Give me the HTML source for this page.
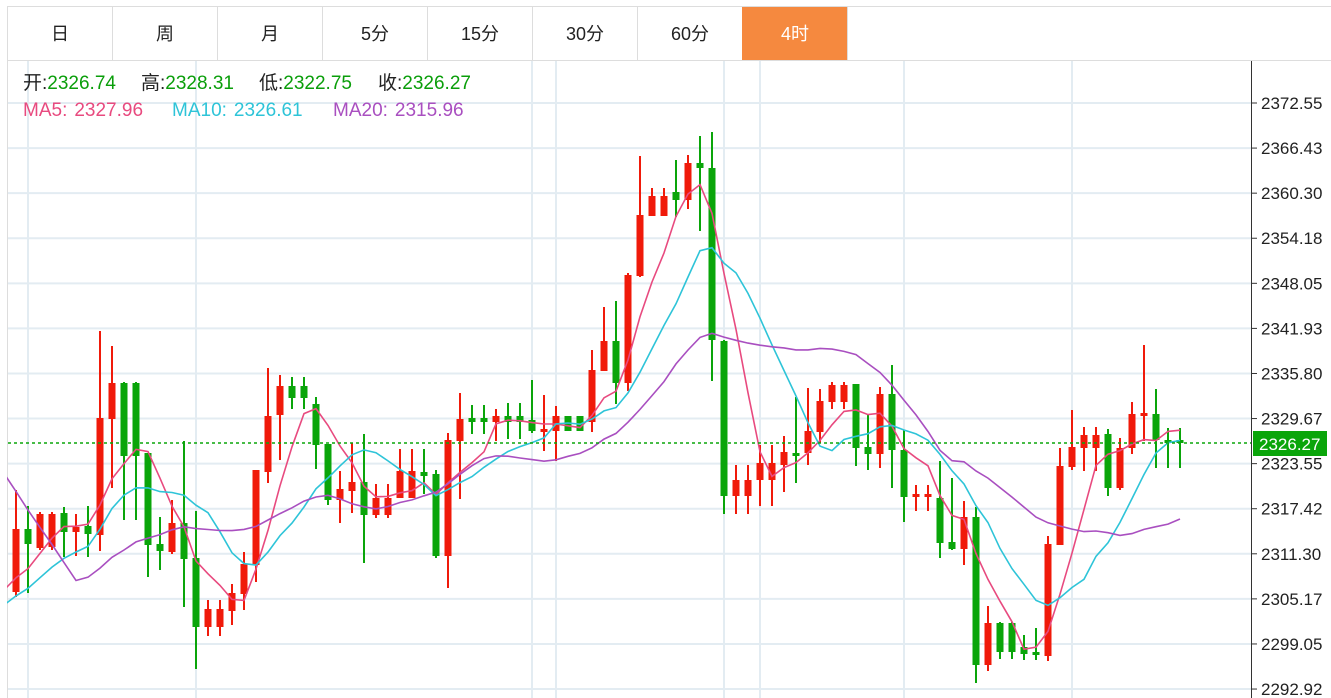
<!DOCTYPE html>
<html><head><meta charset="utf-8"><style>
body{margin:0;width:1331px;height:698px;background:#fff;overflow:hidden;font-family:"Liberation Sans","Noto Sans CJK SC",sans-serif;position:relative}
.tabs{position:absolute;left:7px;top:6px;height:53px;border-top:1px solid #ddd;border-bottom:1px solid #ddd;width:1324px;}
.tab{position:absolute;top:0;width:104px;height:53px;border-left:1px solid #ddd;text-align:center;line-height:55px;font-size:18px;color:#222}
.tab.on{background:#f5893f;color:#fff;border-left-color:#f5893f}
.lg{position:absolute;font-size:19px;white-space:nowrap;line-height:24px}
.g{color:#0a9e0a}
svg{position:absolute;left:0;top:0}
</style></head><body>
<svg id="s" width="1331" height="698"></svg>
<div class="tabs">
<div class="tab" style="left:0">日</div><div class="tab" style="left:105px">周</div><div class="tab" style="left:210px">月</div><div class="tab" style="left:315px">5分</div><div class="tab" style="left:420px">15分</div><div class="tab" style="left:525px">30分</div><div class="tab" style="left:630px">60分</div><div class="tab on" style="left:735px">4时</div><div class="tab" style="left:840px;border-left:1px solid #ddd;width:1px"></div>
</div>
<div class="lg" style="left:23px;top:72px;color:#222">开:<span class="g">2326.74</span></div>
<div class="lg" style="left:141px;top:72px;color:#222">高:<span class="g">2328.31</span></div>
<div class="lg" style="left:259px;top:72px;color:#222">低:<span class="g">2322.75</span></div>
<div class="lg" style="left:378px;top:72px;color:#222">收:<span class="g">2326.27</span></div>
<div class="lg" style="left:23px;top:99px;color:#e84a7f">MA5:<span style="margin-left:7px">2327.96</span></div>
<div class="lg" style="left:172px;top:99px;color:#2ec4d8">MA10:<span style="margin-left:7px">2326.61</span></div>
<div class="lg" style="left:333px;top:99px;color:#a94fc0">MA20:<span style="margin-left:7px">2315.96</span></div>
<script>
var C=[
[490,529,592,597,'R'],[506,529,544,593,'G'],[512,514,548,550,'R'],[512,514,547,550,'R'],[507,513,532,557,'G'],[514,527,532,556,'R'],[506,526,534,557,'G'],[331,418,535,551,'R'],[346,383,419,488,'R'],[382,383,456,520,'G'],[382,383,456,520,'G'],[453,453,545,577,'G'],[517,544,551,570,'G'],[500,523,552,554,'R'],[441,523,559,607,'G'],[511,558,627,669,'G'],[600,609,627,636,'R'],[600,609,627,636,'R'],[584,593,611,625,'R'],[552,564,594,610,'R'],[470,470,565,582,'R'],[368,416,472,483,'R'],[375,386,415,460,'R'],[377,386,398,409,'G'],[377,386,398,409,'G'],[397,404,445,469,'G'],
[444,444,500,505,'G'],[471,489,500,523,'R'],[443,482,491,513,'R'],[434,482,515,563,'G'],[484,498,515,518,'R'],[484,498,515,518,'R'],[449,471,498,498,'R'],[449,471,498,498,'R'],[449,472,476,494,'G'],[470,474,556,558,'G'],[433,440,556,588,'R'],[393,419,441,499,'R'],[405,418,422,434,'G'],[405,418,422,434,'G'],[409,416,422,441,'R'],[403,416,422,439,'G'],[403,416,422,439,'G'],[380,420,431,433,'G'],[395,429,431,451,'R'],[406,416,431,461,'R'],[416,416,431,431,'G'],[416,416,431,431,'G'],[350,370,422,432,'R'],[307,341,371,371,'R'],[301,341,383,404,'G'],[273,275,383,391,'R'],
[156,215,276,277,'R'],[188,196,216,216,'R'],[188,196,216,216,'R'],[160,192,200,217,'G'],[155,163,200,209,'R'],[136,163,168,231,'G'],[132,168,340,381,'G'],[340,341,496,514,'G'],[465,480,496,514,'R'],[465,480,496,514,'R'],[445,463,480,506,'R'],[445,463,480,506,'R'],[436,452,465,492,'R'],[397,453,455,483,'G'],[388,431,453,465,'R'],[389,401,432,443,'R'],[382,385,402,409,'R'],[382,385,402,409,'R'],[384,384,448,466,'G'],[415,447,454,470,'G'],[387,394,454,468,'R'],[365,394,450,488,'G'],[430,450,497,522,'G'],[485,494,496,511,'R'],[485,494,496,511,'R'],
[461,498,543,558,'G'],[478,542,549,550,'G'],[501,517,549,565,'R'],[507,517,665,683,'G'],[606,623,665,671,'R'],[622,623,652,659,'G'],[622,623,652,659,'G'],[635,647,654,660,'G'],[628,652,655,660,'G'],[536,544,656,661,'R'],[448,466,545,545,'R'],[410,447,467,470,'R'],[427,435,448,471,'R'],[427,435,448,471,'R'],[429,434,488,496,'G'],[438,448,488,490,'R'],[402,414,448,454,'R'],[345,413,415,441,'R'],[389,414,440,468,'G'],[428,440,442,468,'G'],[428,440,442,468,'G']];
var s='',i,k;
var vx=[28,196,532,556,724,760,904,1072];
for(k=0;k<vx.length;k++)s+='<line x1="'+vx[k]+'" y1="60" x2="'+vx[k]+'" y2="698" stroke="#e3ecf2" stroke-width="2"/>';
var labs=['2372.55','2366.43','2360.30','2354.18','2348.05','2341.93','2335.80','2329.67','2323.55','2317.42','2311.30','2305.17','2299.05','2292.92'];
for(k=0;k<14;k++){var y=103+k*45.08;s+='<line x1="8" y1="'+y+'" x2="1251" y2="'+y+'" stroke="#e3ecf2" stroke-width="2"/><line x1="1251" y1="'+y+'" x2="1257" y2="'+y+'" stroke="#333"/><text x="1261" y="'+(y+6)+'" font-size="17" fill="#222" font-family="Liberation Sans">'+labs[k]+'</text>';}
s+='<line x1="7.5" y1="60" x2="7.5" y2="698" stroke="#ddd"/><line x1="1251.5" y1="60" x2="1251.5" y2="698" stroke="#333"/>';
for(i=0;i<C.length;i++){var c=C[i],x=16+i*12,col=c[4]=='R'?'#f01a0a':'#0aa50a';
s+='<line x1="'+x+'" y1="'+c[0]+'" x2="'+x+'" y2="'+c[3]+'" stroke="'+col+'" stroke-width="2"/>';
s+='<rect x="'+(x-3.5)+'" y="'+c[1]+'" width="7" height="'+Math.max(3,c[2]-c[1])+'" fill="'+col+'"/>';}
var cl=[];for(k=0;k<6;k++)cl.push(170);for(k=0;k<4;k++)cl.push(600);for(k=0;k<5;k++)cl.push(620);for(k=0;k<5;k++)cl.push(590);
for(i=0;i<C.length;i++)cl.push(C[i][4]=='R'?C[i][1]:C[i][2]);
function ma(n,color){var p='';for(var j=-1;j<C.length;j++){var t=0;for(var m=0;m<n;m++)t+=cl[20+j-m];p+=(j<0?'M':'L')+(16+j*12)+' '+(t/n).toFixed(1)+' ';}
return '<path d="'+p+'" fill="none" stroke="'+color+'" stroke-width="1.6"/>';}
s+=ma(5,'#e84a7f')+ma(10,'#2ec4d8')+ma(20,'#a94fc0');
s+='<rect x="0" y="60" width="7" height="638" fill="#fff"/>';
s+='<line x1="8" y1="443" x2="1251" y2="443" stroke="#0aa50a" stroke-width="1.5" stroke-dasharray="3,3"/>';
s+='<rect x="1253" y="431" width="74" height="25" fill="#0aa50a"/><text x="1259" y="450" font-size="17" fill="#fff" font-family="Liberation Sans">2326.27</text>';
document.getElementById('s').innerHTML=s;
</script>
</body></html>
